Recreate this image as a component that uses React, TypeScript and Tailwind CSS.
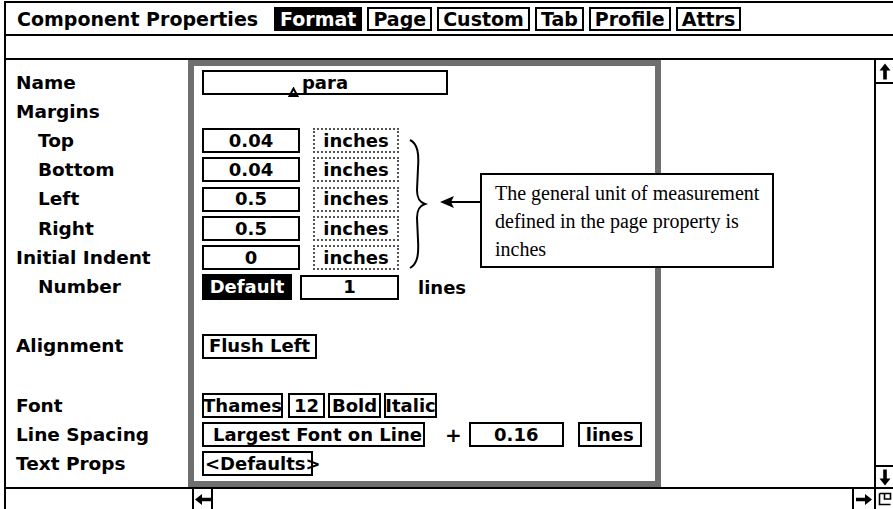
import clsx from "clsx";
import type { ReactNode } from "react";

type Row = { label: string; indent?: boolean; h: string };

const rows: Row[] = [
  { label: "Name", h: "h-[29px]" },
  { label: "Margins", h: "h-[29px]" },
  { label: "Top", indent: true, h: "h-[29px]" },
  { label: "Bottom", indent: true, h: "h-[29px]" },
  { label: "Left", indent: true, h: "h-[30px]" },
  { label: "Right", indent: true, h: "h-[29px]" },
  { label: "Initial Indent", h: "h-[29px]" },
  { label: "Number", indent: true, h: "h-[30px]" },
  { label: "", h: "h-[29px]" },
  { label: "Alignment", h: "h-[30px]" },
  { label: "", h: "h-[30px]" },
  { label: "Font", h: "h-[29px]" },
  { label: "Line Spacing", h: "h-[29px]" },
  { label: "Text Props", h: "h-[29px]" },
];

const tabs = ["Format", "Page", "Custom", "Tab", "Profile", "Attrs"];

const Box = ({
  children,
  className,
  dotted,
}: {
  children?: ReactNode;
  className?: string;
  dotted?: boolean;
}) => (
  <div
    className={clsx(
      "h-[25px] border-2 flex items-center justify-center text-[18px] leading-none",
      dotted ? "border-dotted border-[#555]" : "border-black",
      className
    )}
  >
    {children}
  </div>
);

const MarginRow = ({ value }: { value: string }) => (
  <div className="flex items-center">
    <Box className="w-[98px]">{value}</Box>
    <Box dotted className="w-[86px] ml-[13px]">
      inches
    </Box>
  </div>
);

const fields: ReactNode[] = [
  <Box className="w-[246px]">
    <span className="relative">
      <svg
        className="absolute left-[-14px] bottom-[-5px]"
        width="11"
        height="10"
        viewBox="0 0 11 10"
      >
        <path d="M1.5 9 L5.5 1.5 L9.5 9 Z" fill="none" stroke="black" strokeWidth="2" />
      </svg>
      para
    </span>
  </Box>,
  null,
  <MarginRow value="0.04" />,
  <MarginRow value="0.04" />,
  <MarginRow value="0.5" />,
  <MarginRow value="0.5" />,
  <MarginRow value="0" />,
  <div className="flex items-center">
    <div className="h-[26px] w-[90px] bg-black text-white flex items-center justify-center text-[18px] leading-none">
      Default
    </div>
    <Box className="w-[99px] ml-[8px]">1</Box>
    <span className="ml-[19px] text-[18px]">lines</span>
  </div>,
  null,
  <Box className="w-[115px]">Flush Left</Box>,
  null,
  <div className="flex items-center">
    <Box className="w-[81px] h-[24px] text-[17px]">Thames</Box>
    <Box className="w-[37px] h-[24px] ml-[5px] text-[17px]">12</Box>
    <Box className="w-[53px] h-[24px] ml-[3px] text-[17px]">Bold</Box>
    <Box className="w-[53px] h-[24px] ml-[3px] text-[17px]">Italic</Box>
  </div>,
  <div className="flex items-center">
    <Box className="w-[223px] justify-start pl-[9px]">Largest Font on Line</Box>
    <span className="ml-[20px] text-[20px] leading-none">+</span>
    <Box className="w-[95px] ml-[7px]">0.16</Box>
    <Box className="w-[64px] ml-[14px]">lines</Box>
  </div>,
  <Box className="w-[111px] justify-start pl-[1px] text-[17px]">&lt;Defaults&gt;</Box>,
];

const Arrow = ({ dir }: { dir: "up" | "down" | "left" | "right" }) => {
  const rot = { up: "rotate-0", down: "rotate-180", left: "-rotate-90", right: "rotate-90" }[dir];
  return (
    <svg width="12" height="17" viewBox="0 0 12 17" className={rot}>
      <path d="M6 0.5 L11.5 7.5 H7.8 V16.5 H4.2 V7.5 H0.5 Z" fill="black" />
    </svg>
  );
};

export default function App() {
  return (
    <div
      className="relative w-[893px] h-[509px] bg-white pt-[1px] pl-[4px] overflow-hidden text-black font-bold"
      style={{ fontFamily: '"DejaVu Sans", sans-serif' }}
    >
      <div className="flex flex-col h-[508px] border-l-2 border-t-2 border-black">
        {/* title bar */}
        <div className="h-[33px] border-b-2 border-black flex items-center pl-[11px] pt-[1px]">
          <span className="text-[19px] mr-[16px]">Component Properties</span>
          <div className="flex gap-[5px]">
            {tabs.map((t) => (
              <div
                key={t}
                className={clsx(
                  "h-[24px] px-[4px] border-2 flex items-center text-[19px] leading-none",
                  t === "Format" ? "bg-black text-white border-black" : "border-black"
                )}
              >
                {t}
              </div>
            ))}
          </div>
        </div>

        <div className="h-[22px]" />

        {/* main */}
        <div className="h-[429px] border-t-2 border-black flex">
          <div className="w-[182px] pt-[8px] flex flex-col">
            {rows.map((r, i) => (
              <div
                key={i}
                className={clsx(
                  r.h,
                  "flex items-center text-[18.5px]",
                  r.indent ? "pl-[32px]" : "pl-[10px]"
                )}
              >
                {r.label}
              </div>
            ))}
          </div>

          <div className="w-[473px] border-[6px] border-[#6f6f6f] pt-[2px] pl-[8px] flex flex-col">
            {rows.map((r, i) => (
              <div key={i} className={clsx(r.h, "flex items-center")}>
                {fields[i]}
              </div>
            ))}
          </div>

          <div className="flex-1" />

          <div className="w-[19px] border-l-2 border-black flex flex-col">
            <div className="h-[24px] border-b-2 border-black flex items-center justify-center">
              <Arrow dir="up" />
            </div>
            <div className="mt-auto h-[22px] border-t-2 border-black flex items-center justify-center">
              <Arrow dir="down" />
            </div>
          </div>
        </div>

        {/* bottom bar */}
        <div className="h-[22px] border-t-2 border-black flex">
          <div className="w-[186px]" />
          <div className="w-[21px] border-x-2 border-black flex items-center justify-center">
            <Arrow dir="left" />
          </div>
          <div className="flex-1" />
          <div className="w-[22px] border-l-2 border-black flex items-center justify-center">
            <Arrow dir="right" />
          </div>
          <div className="w-[19px] border-l-2 border-black flex items-center justify-center">
            <svg width="14" height="14" viewBox="0 0 14 14">
              <path d="M1.5 1.5 H12.5 V7 H6.5 V1.5 M1.5 1.5 V12.5 H12.5" fill="none" stroke="black" strokeWidth="1.6" />
            </svg>
          </div>
        </div>
      </div>

      {/* brace */}
      <svg className="absolute left-[405px] top-[138px]" width="25" height="132" viewBox="0 0 25 132">
        <path
          d="M5 2 C13 6, 14 16, 13 30 L12 52 C12 60, 14 64, 20 66 C14 68, 12 72, 12 80 L13 102 C14 118, 12 126, 5 130"
          fill="none"
          stroke="black"
          strokeWidth="2"
        />
      </svg>

      {/* arrow to callout */}
      <svg className="absolute left-[438px] top-[195px]" width="44" height="14" viewBox="0 0 44 14">
        <path d="M2 7 L16 1 L13 7 L16 13 Z" fill="black" />
        <path d="M12 7 H44" stroke="black" strokeWidth="2" />
      </svg>

      {/* callout */}
      <div
        className="absolute left-[480px] top-[173px] w-[294px] h-[95px] border-2 border-black bg-white pl-[13px] pt-[4px] text-[20px] leading-[28px] font-normal"
        style={{ fontFamily: '"Liberation Serif", serif' }}
      >
        The general unit of measurement
        <br />
        defined in the page property is
        <br />
        inches
      </div>
    </div>
  );
}
